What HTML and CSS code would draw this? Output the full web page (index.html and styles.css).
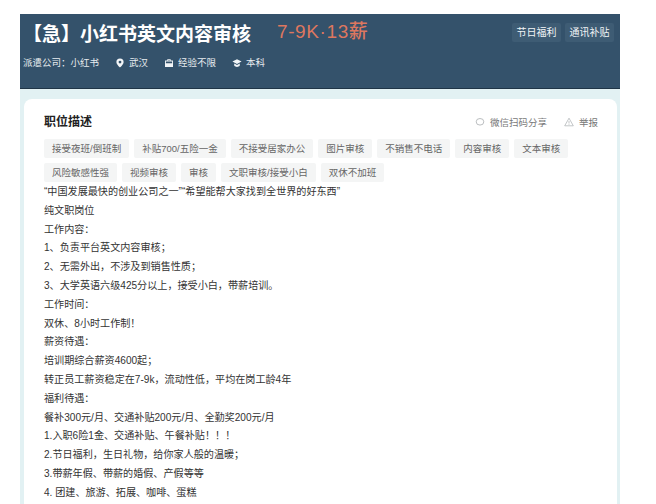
FILE: index.html
```html
<!DOCTYPE html>
<html lang="zh">
<head>
<meta charset="utf-8">
<title>小红书英文内容审核</title>
<link rel="stylesheet" href="styles.css">
</head>
<body>
<div class="page">
  <header class="hero">
    <div class="hero-main">
      <div class="title-row">
        <h1 class="title">【急】小红书英文内容审核</h1>
        <span class="salary">7-9K·13薪</span>
      </div>
      <div class="meta">
        <span class="meta-item">派遣公司：小红书</span>
        <span class="meta-item"><svg class="ico" viewBox="0 0 10 10"><path d="M5 .5a3.6 3.6 0 0 0-3.6 3.6C1.400 6.600 5 9.600 5 9.600s3.600-3 3.600-5.500A3.600 3.600 0 0 0 5 .5zm0 5a1.400 1.400 0 1 1 0-2.800 1.400 1.400 0 0 1 0 2.800z" fill="#f2f5f7" fill-rule="evenodd"/></svg>武汉</span>
        <span class="meta-item"><svg class="ico" viewBox="0 0 10 10"><path d="M3.300 2.500V1.200h3.400v1.300H9V9H1V2.500zm.9 0h1.600v-.5H4.200zM1.900 5.200h6.200V3.400H1.900z" fill="#f2f5f7" fill-rule="evenodd"/></svg>经验不限</span>
        <span class="meta-item"><svg class="ico" viewBox="0 0 10 10"><path d="M5 1.200 .4 3.600 5 6l4.600-2.400zM2.200 5.500v2C3 8.500 4 8.900 5 8.900s2-.4 2.800-1.400v-2L5 7z" fill="#f2f5f7"/></svg>本科</span>
      </div>
    </div>
    <div class="perks">
      <span class="perk">节日福利</span>
      <span class="perk">通讯补贴</span>
    </div>
  </header>
  <main class="panel">
    <section class="card">
      <div class="card-head">
        <h2 class="card-title">职位描述</h2>
        <div class="actions">
          <span class="action"><svg class="ico-sm" viewBox="0 0 10 10"><ellipse cx="5" cy="4.800" rx="3.800" ry="3.300" fill="none" stroke="#a9adb0" stroke-width=".8"/></svg>微信扫码分享</span>
          <span class="action"><svg class="ico-sm" viewBox="0 0 10 10"><path d="M5 1.200 9.300 8.800H.7zM5 4v2.500M5 7.200v.7" fill="none" stroke="#a9adb0" stroke-width=".7"/></svg>举报</span>
        </div>
      </div>
      <div class="tags">
        <span class="tag">接受夜班/倒班制</span>
        <span class="tag">补贴700/五险一金</span>
        <span class="tag">不接受居家办公</span>
        <span class="tag">图片审核</span>
        <span class="tag">不销售不电话</span>
        <span class="tag">内容审核</span>
        <span class="tag">文本审核</span>
        <span class="tag">风险敏感性强</span>
        <span class="tag">视频审核</span>
        <span class="tag">审核</span>
        <span class="tag">文职审核/接受小白</span>
        <span class="tag">双休不加班</span>
      </div>
      <div class="desc">
        <p>“中国发展最快的创业公司之一”“希望能帮大家找到全世界的好东西”</p>
        <p>纯文职岗位</p>
        <p>工作内容：</p>
        <p>1、负责平台英文内容审核；</p>
        <p>2、无需外出，不涉及到销售性质；</p>
        <p>3、大学英语六级425分以上，接受小白，带薪培训。</p>
        <p>工作时间：</p>
        <p>双休、8小时工作制！</p>
        <p>薪资待遇：</p>
        <p>培训期综合薪资4600起；</p>
        <p>转正员工薪资稳定在7-9k，流动性低，平均在岗工龄4年</p>
        <p>福利待遇：</p>
        <p>餐补300元/月、交通补贴200元/月、全勤奖200元/月</p>
        <p>1.入职6险1金、交通补贴、午餐补贴！！！</p>
        <p>2.节日福利，生日礼物，给你家人般的温暖；</p>
        <p>3.带薪年假、带薪的婚假、产假等等</p>
        <p>4. 团建、旅游、拓展、咖啡、蛋糕</p>
      </div>
    </section>
  </main>
</div>
</body>
</html>
```
FILE: styles.css
```css
* { box-sizing: border-box; }
html, body { margin: 0; height: 100%; }
body {
  background: #fff;
  overflow: hidden;
  font-family: "Liberation Sans", "Noto Sans CJK SC", sans-serif;
}
.page { padding: 14px 36px 0 20px; }
.hero {
  height: 75px;
  background: #34526b;
  border-bottom: 1px solid #1f3547;
  display: flex;
  justify-content: space-between;
  padding: 9px 6px 0 3px;
  color: #fff;
}
.title-row { display: flex; align-items: center; gap: 26px; height: 24px; margin-bottom: 9px; }
.title { margin: 0; font-size: 19px; font-weight: 700; line-height: 24px; }
.salary { font-size: 19px; line-height: 20px; color: #dd775f; font-weight: 500; letter-spacing: .6px; margin-top: -6px; }
.meta { display: flex; gap: 16px; font-size: 9.500px; line-height: 14px; color: #e8edf0; }
.meta-item { display: flex; align-items: center; gap: 4px; }
.ico { width: 10px; height: 10px; }
.perks { display: flex; gap: 4px; }
.perk {
  height: 19px;
  padding: 0 4.500px;
  font-size: 10px;
  line-height: 19px;
  background: #3e5c74;
  border-radius: 2px;
  color: #f2f5f7;
}
.panel {
  background: #e2f1f3;
  padding: 10px 3px 0 4px;
  height: 415px;
}
.card {
  background: #fff;
  border-radius: 8px 8px 0 0;
  padding: 14px 19px 0 20px;
  height: 100%;
}
.card-head { display: flex; justify-content: space-between; align-items: center; height: 18px; margin-bottom: 8px; }
.card-title { margin: 0; font-size: 12px; line-height: 18px; font-weight: 700; color: #222; }
.actions { display: flex; gap: 17px; font-size: 9.500px; color: #777; }
.action { display: flex; align-items: center; gap: 5px; }
.ico-sm { width: 10px; height: 10px; }
.tags { display: flex; flex-wrap: wrap; gap: 5px; margin-bottom: 1px; }
.tag {
  height: 19px;
  padding: 0 8px;
  font-size: 9.500px;
  line-height: 19px;
  background: #f4f5f5;
  border-radius: 2px;
  color: #666;
}
.desc { font-size: 10.100px; line-height: 18.800px; color: #333; }
.desc p { margin: 0; }
```
